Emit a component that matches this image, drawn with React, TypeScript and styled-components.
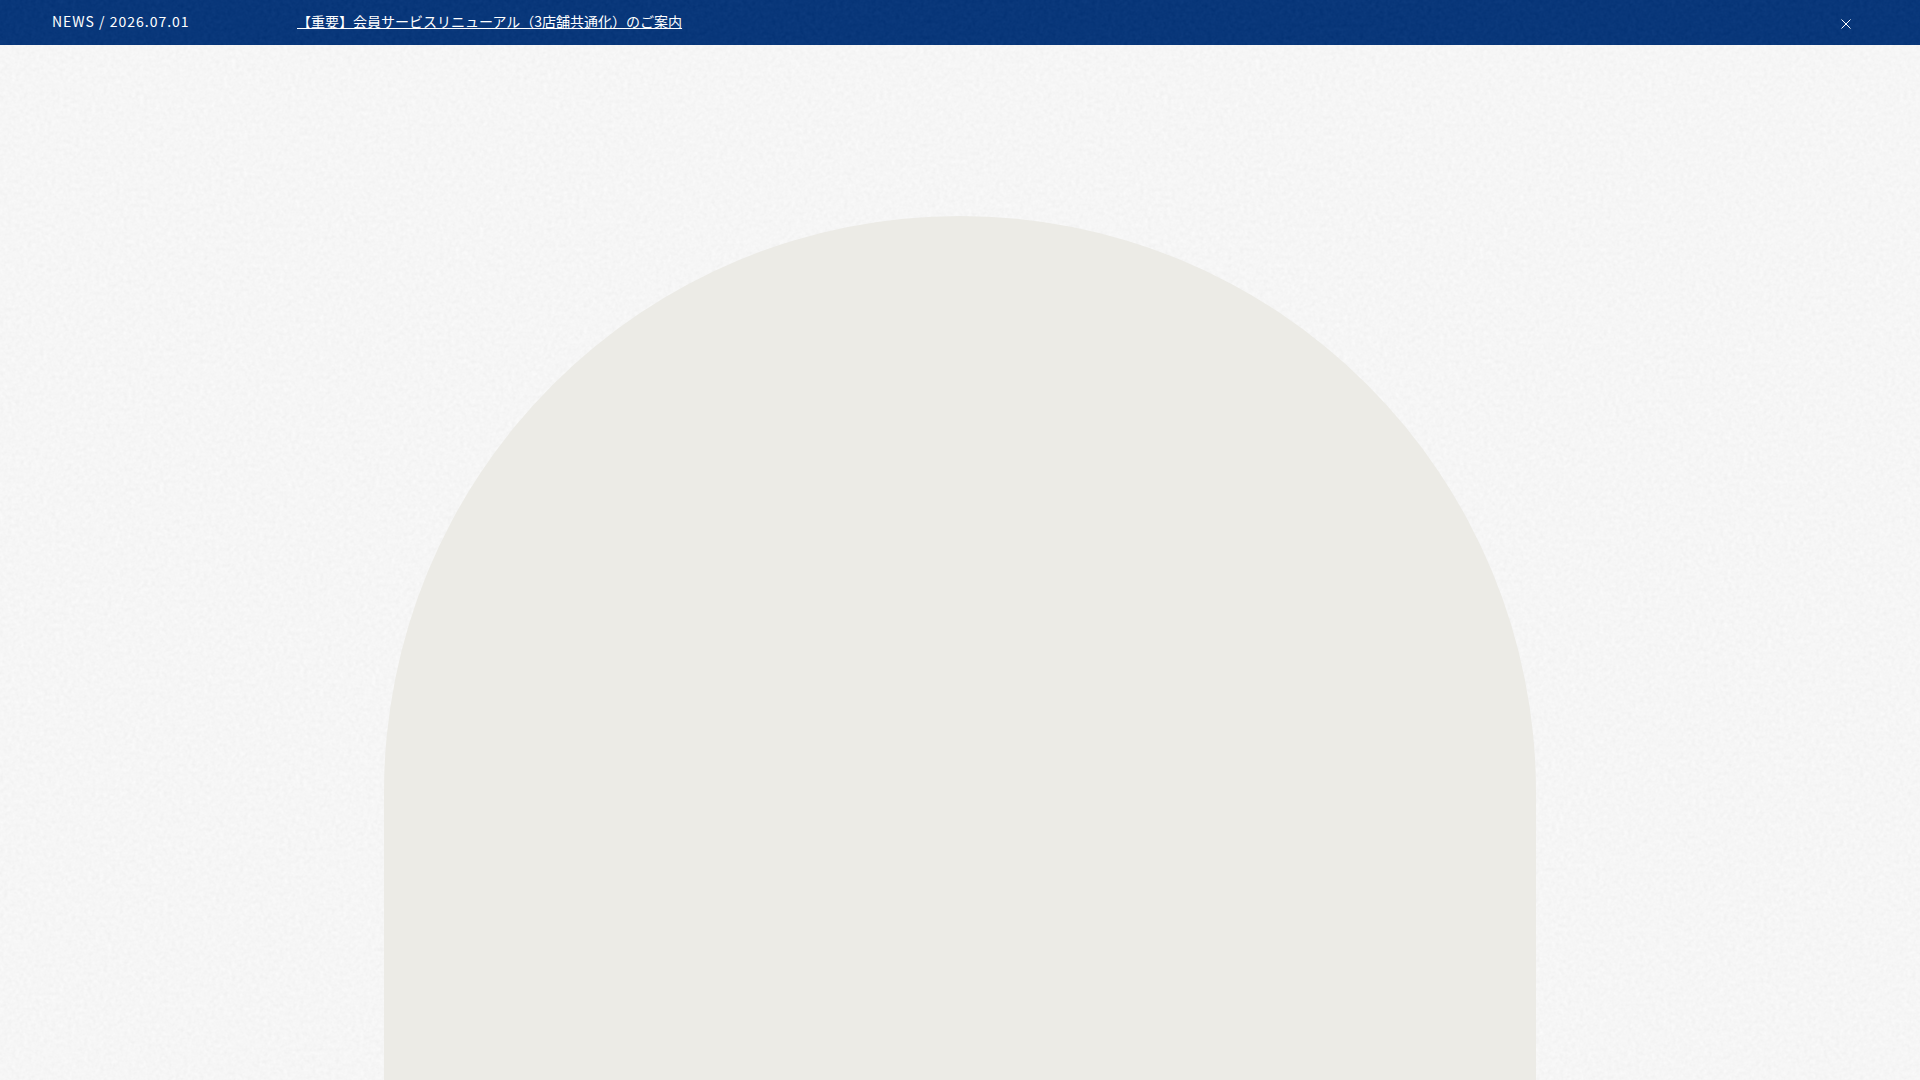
import React, { useState } from "react";
import styled, { createGlobalStyle } from "styled-components";

const BAR_HEIGHT = "45px";

const GlobalStyle = createGlobalStyle`
  *, *::before, *::after { box-sizing: border-box; }
  body {
    margin: 0;
    background: #fdfdfd;
    color: #ffffff;
    font-family: "Noto Sans CJK JP", "Noto Sans", sans-serif;
  }
`;

const Page = styled.div`
  position: relative;
  display: flex;
  flex-direction: column;
  min-height: 100vh;
`;

const NewsBar = styled.header`
  display: flex;
  align-items: center;
  min-height: ${BAR_HEIGHT};
  padding: 2px 64px 0 52px;
  background: #02337a;
  font-size: 14px;
  line-height: 20px;

  > * {
    position: relative;
    z-index: 2;
  }
`;

const NewsDate = styled.p`
  flex: 0 0 245px;
  margin: 0;
  padding-bottom: 6px;
  letter-spacing: 1px;
  font-weight: 400;
`;

const NewsLink = styled.a`
  padding-bottom: 6px;
  color: inherit;
  font-weight: 400;
  text-decoration: underline;
  text-decoration-skip-ink: none;
  text-decoration-thickness: 1px;
  text-underline-offset: 1px;
`;

const CloseButton = styled.button`
  display: grid;
  place-items: center;
  width: 20px;
  height: 20px;
  margin-left: auto;
  padding: 0;
  border: 0;
  background: none;
  color: inherit;
  cursor: pointer;
`;

const Stage = styled.main`
  display: flex;
  flex: 1;
  justify-content: center;
  padding-top: calc(20vh - ${BAR_HEIGHT});
`;

const Arch = styled.div`
  position: relative;
  z-index: 2;
  width: 60%;
  border-radius: 30vw 30vw 0 0;
  background: #ecebe6;
`;

const Grain = styled.svg`
  position: absolute;
  inset: 0;
  z-index: 1;
  width: 100%;
  height: 100%;
  opacity: 0.05;
  pointer-events: none;
`;

function PaperGrain() {
  return (
    <Grain aria-hidden="true">
      <filter id="paper-grain" x="0" y="0" width="100%" height="100%" colorInterpolationFilters="sRGB">
        <feTurbulence type="fractalNoise" baseFrequency="0.25" numOctaves="2" seed="4" />
        <feColorMatrix values="0.55 0.55 0 0 -0.05  0.55 0.55 0 0 -0.05  0.55 0.55 0 0 -0.05  0 0 0 0 1" />
      </filter>
      <rect width="100%" height="100%" filter="url(#paper-grain)" />
    </Grain>
  );
}

export default function App() {
  const [newsOpen, setNewsOpen] = useState(true);
  return (
    <>
      <GlobalStyle />
      <Page>
        <PaperGrain />
        {newsOpen && (
          <NewsBar>
            <NewsDate>NEWS / 2026.07.01</NewsDate>
            <NewsLink href="#news">【重要】会員サービスリニューアル（3店舗共通化）のご案内</NewsLink>
            <CloseButton type="button" aria-label="閉じる" onClick={() => setNewsOpen(false)}>
              <svg width="10" height="10" viewBox="0 0 10 10" stroke="currentColor" aria-hidden="true">
                <path d="M0.5 0.5L9.5 9.5M9.5 0.5L0.5 9.5" />
              </svg>
            </CloseButton>
          </NewsBar>
        )}
        <Stage>
          <Arch />
        </Stage>
      </Page>
    </>
  );
}
